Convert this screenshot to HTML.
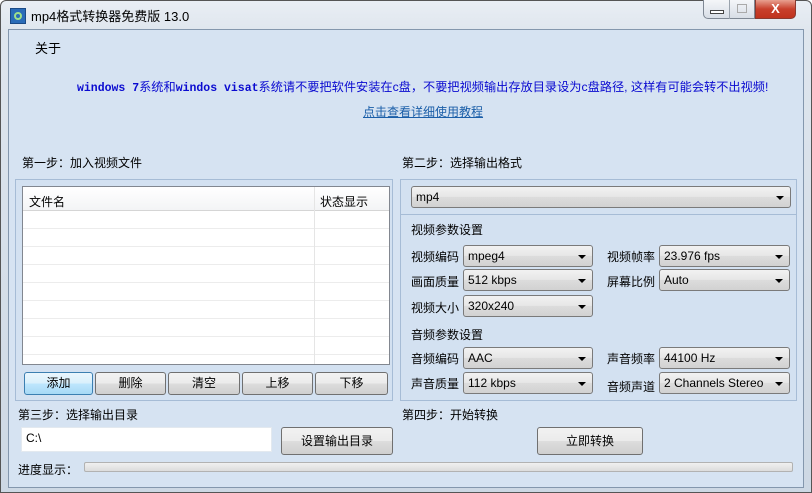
<!DOCTYPE html>
<html><head><meta charset="utf-8"><style>
*{margin:0;padding:0;box-sizing:border-box}
body{width:812px;height:493px;overflow:hidden;background:#fff;font-family:"Liberation Sans","Noto Sans CJK SC",sans-serif;font-size:12px;color:#000;position:relative}
.a{position:absolute;white-space:nowrap}
.win{position:absolute;left:0;top:0;width:812px;height:493px;border:1px solid #555;border-radius:6px 6px 0 0;background:linear-gradient(#e9eef4,#dfe6ee 30px,#cdd8e4);}
.client{position:absolute;left:8px;top:29px;width:796px;height:459px;background:#d6e3f2;border:1px solid #8497ad}
.grp{position:absolute;border:1px solid #a6bcd6;background:#d3e1f1}
.btn{position:absolute;border:1px solid #707070;border-radius:3px;background:linear-gradient(#f2f2f2 0,#ebebeb 50%,#dddddd 51%,#cfcfcf);text-align:center;font-size:12px}
.cb{position:absolute;border:1px solid #7a7a7a;border-radius:3px;background:linear-gradient(#f2f2f2,#e6e6e6 50%,#dcdcdc 51%,#d2d2d2);font-size:12px;padding-left:4px;line-height:21px}
.cb:after{content:"";position:absolute;right:6px;top:9px;border-left:4px solid transparent;border-right:4px solid transparent;border-top:4px solid #000}
.m{font-family:'Liberation Mono',monospace;font-size:11.5px;font-weight:bold}
</style></head><body>
<div class="win"></div>
<div class="a" style="left:10px;top:8px;width:16px;height:16px;background:#2a6cb8;border:1px solid #1b4a86"><div style="position:absolute;left:3px;top:3px;width:8px;height:8px;border:2px solid #9fe08a;border-radius:50%"></div></div>
<div class="a" style="left:31px;top:6px;font-size:13px">mp4格式转换器免费版 13.0</div>
<div class="a" style="left:703px;top:0;width:52px;height:19px;border:1px solid #7f8894;border-top:none;border-radius:0 0 0 5px;background:linear-gradient(#f4f6f9,#d8dee6)"></div>
<div class="a" style="left:729px;top:0;width:1px;height:19px;background:#9aa3ad"></div>
<div class="a" style="left:710px;top:10px;width:14px;height:4px;border:1px solid #444;background:#fff"></div>
<div class="a" style="left:737px;top:4px;width:10px;height:9px;border:1px solid #aaa"></div>
<div class="a" style="left:755px;top:0;width:41px;height:19px;border:1px solid #8a3a30;border-top:none;border-radius:0 0 5px 0;background:linear-gradient(#e8a090,#c8402c 50%,#c0331e);color:#fff;font-weight:bold;text-align:center;font-size:13px;line-height:17px">X</div>
<div class="client"></div>
<div class="a" style="left:35px;top:38px;font-size:13px">关于</div>
<div class="a" style="left:77px;top:77px;color:#0a0ad0;font-size:12.2px"><span class="m">windows 7</span>系统和<span class="m">windos visat</span>系统请不要把软件安装在c盘，不要把视频输出存放目录设为c盘路径, 这样有可能会转不出视频!</div>
<div class="a" style="left:363px;top:103px;color:#1a5ea8;text-decoration:underline">点击查看详细使用教程</div>
<div class="a" style="left:22px;top:154px">第一步：加入视频文件</div>
<div class="a" style="left:402px;top:154px">第二步：选择输出格式</div>
<div class="grp" style="left:15px;top:179px;width:378px;height:222px"></div>
<div class="a" style="left:22px;top:186px;width:368px;height:179px;background:#fff;border:1px solid #828790;background-image:repeating-linear-gradient(#fff 0,#fff 17px,#ececec 17px,#ececec 18px);background-position:0 24px"></div>
<div class="a" style="left:23px;top:187px;width:366px;height:24px;background:linear-gradient(#fff,#f3f4f6);border-bottom:1px solid #d5d5d5"></div>
<div class="a" style="left:314px;top:187px;width:1px;height:177px;background:#e5e5e5"></div>
<div class="a" style="left:29px;top:193px">文件名</div>
<div class="a" style="left:320px;top:193px">状态显示</div>
<div class="btn" style="left:24px;top:372px;width:69px;height:23px;line-height:21px;border-color:#3c7fb1;background:linear-gradient(#eaf6fd,#d9f0fc 50%,#bee6fd 51%,#a7d9f5)">添加</div>
<div class="btn" style="left:95px;top:372px;width:71px;height:23px;line-height:21px">删除</div>
<div class="btn" style="left:168px;top:372px;width:72px;height:23px;line-height:21px">清空</div>
<div class="btn" style="left:242px;top:372px;width:71px;height:23px;line-height:21px">上移</div>
<div class="btn" style="left:315px;top:372px;width:73px;height:23px;line-height:21px">下移</div>
<div class="grp" style="left:400px;top:179px;width:397px;height:222px"></div>
<div class="cb" style="left:411px;top:186px;width:380px;height:22px">mp4</div>
<div class="a" style="left:401px;top:214px;width:395px;height:1px;background:#a6bcd6"></div>
<div class="a" style="left:411px;top:221px">视频参数设置</div>
<div class="a" style="left:411px;top:248px">视频编码</div><div class="cb" style="left:463px;top:245px;width:130px;height:22px">mpeg4</div>
<div class="a" style="left:607px;top:248px">视频帧率</div><div class="cb" style="left:659px;top:245px;width:131px;height:22px">23.976 fps</div>
<div class="a" style="left:411px;top:273px">画面质量</div><div class="cb" style="left:463px;top:269px;width:130px;height:22px">512 kbps</div>
<div class="a" style="left:607px;top:273px">屏幕比例</div><div class="cb" style="left:659px;top:269px;width:131px;height:22px">Auto</div>
<div class="a" style="left:411px;top:299px">视频大小</div><div class="cb" style="left:463px;top:295px;width:130px;height:22px">320x240</div>
<div class="a" style="left:411px;top:326px">音频参数设置</div>
<div class="a" style="left:411px;top:350px">音频编码</div><div class="cb" style="left:463px;top:347px;width:130px;height:22px">AAC</div>
<div class="a" style="left:607px;top:350px">声音频率</div><div class="cb" style="left:659px;top:347px;width:131px;height:22px">44100 Hz</div>
<div class="a" style="left:411px;top:375px">声音质量</div><div class="cb" style="left:463px;top:372px;width:130px;height:22px">112 kbps</div>
<div class="a" style="left:607px;top:378px">音频声道</div><div class="cb" style="left:659px;top:372px;width:131px;height:22px">2 Channels Stereo</div>
<div class="a" style="left:18px;top:406px">第三步：选择输出目录</div>
<div class="a" style="left:402px;top:406px">第四步：开始转换</div>
<div class="a" style="left:21px;top:427px;width:251px;height:25px;background:#fff;border:1px solid #e3e9ef;padding:3px 4px">C:\</div>
<div class="btn" style="left:281px;top:427px;width:112px;height:28px;line-height:26px">设置输出目录</div>
<div class="btn" style="left:537px;top:427px;width:106px;height:28px;line-height:26px">立即转换</div>
<div class="a" style="left:18px;top:461px">进度显示：</div>
<div class="a" style="left:84px;top:462px;width:709px;height:10px;border:1px solid #b2b2b2;border-radius:2px;background:linear-gradient(#f0f0f0,#dcdcdc)"></div>
</body></html>
